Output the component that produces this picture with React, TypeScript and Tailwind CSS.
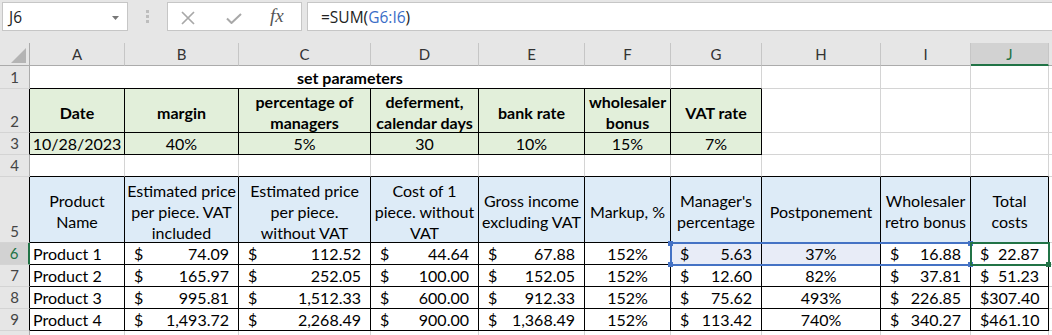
import React from "react";
import clsx from "clsx";

const COLS = ["A", "B", "C", "D", "E", "F", "G", "H", "I", "J", "K"];

// black-bordered blocks: A2:G3 (parameters) and A5:J9 (products)
const inRange = (r: number, c: number) =>
  ((r === 2 || r === 3) && c <= 6) || (r >= 5 && r <= 9 && c <= 9);

const FILL = {
  green: "bg-[#e2efda]",
  blue: "bg-[#ddebf7]",
  sel: "bg-[#e8ecf7]",
} as const;

type Fill = keyof typeof FILL;

type CellProps = {
  r: number;
  c: number;
  span?: number;
  fill?: Fill;
  className?: string;
  children?: React.ReactNode;
};

const Cell = ({ r, c, span = 1, fill, className, children }: CellProps) => {
  const last = c + span - 1;
  const rightBlack = inRange(r, last) || inRange(r, last + 1);
  const cols = Array.from({ length: span }, (_, i) => c + i);
  const bottomBlack = cols.some((i) => inRange(r, i) || inRange(r + 1, i));

  return (
    <div
      className={clsx(
        "relative flex min-w-0 whitespace-nowrap border-b",
        last !== 10 && "border-r",
        rightBlack ? "border-r-black" : "border-r-[#d4d4d4]",
        bottomBlack ? "border-b-black" : "border-b-[#d4d4d4]",
        fill ? FILL[fill] : "bg-white",
        span === 6 && "col-span-6",
        className
      )}
    >
      {children}
    </div>
  );
};

// row 10 is only a sliver at the bottom edge, its number is not visible
const RowHead = ({ r }: { r: number }) => {
  const active = r === 6;
  return (
    <div
      className={clsx(
        "flex items-end justify-center border-b border-b-[#d4d4d4] text-[15px] leading-[22px]",
        active
          ? "border-r-2 border-r-[#217346] bg-[#d2d2d2] text-[#217346]"
          : clsx(
              "border-r bg-[#e6e6e6] text-[#444]",
              inRange(r, 0) ? "border-r-black" : "border-r-[#ababab]"
            )
      )}
    >
      {r < 10 ? r : null}
    </div>
  );
};

const Money = ({ v }: { v: string }) => (
  <div className="flex w-full items-center justify-between px-[9px] pt-[1px]">
    <span>$</span>
    <span>{v}</span>
  </div>
);

const Centered = ({ children }: { children: React.ReactNode }) => (
  <div className="flex w-full items-center justify-center pt-[1px]">{children}</div>
);

const Wrapped = ({ text, bold }: { text: string; bold?: boolean }) => (
  <div
    className={clsx(
      "flex w-full items-center justify-center whitespace-pre-line pt-[3px] text-center leading-[21px]",
      bold && "font-bold"
    )}
  >
    {text}
  </div>
);

const params = [
  ["Date", "10/28/2023"],
  ["margin", "40%"],
  ["percentage of\nmanagers", "5%"],
  ["deferment,\ncalendar days", "30"],
  ["bank rate", "10%"],
  ["wholesaler\nbonus", "15%"],
  ["VAT rate", "7%"],
];

const headers = [
  "Product\nName",
  "Estimated price\nper piece. VAT\nincluded",
  "Estimated price\nper piece.\nwithout VAT",
  "Cost of 1\npiece. without\nVAT",
  "Gross income\nexcluding VAT",
  "Markup, %",
  "Manager's\npercentage",
  "Postponement",
  "Wholesaler\nretro bonus",
  "Total\ncosts",
];

const products = [
  ["Product 1", "74.09", "112.52", "44.64", "67.88", "152%", "5.63", "37%", "16.88", "22.87"],
  ["Product 2", "165.97", "252.05", "100.00", "152.05", "152%", "12.60", "82%", "37.81", "51.23"],
  ["Product 3", "995.81", "1,512.33", "600.00", "912.33", "152%", "75.62", "493%", "226.85", "307.40"],
  ["Product 4", "1,493.72", "2,268.49", "900.00", "1,368.49", "152%", "113.42", "740%", "340.27", "461.10"],
];

const PCT_COLS = [5, 7];

const FormulaBar = () => (
  <div className="flex h-[43px] items-start bg-[#e6e6e6] pl-[2px] pt-[2px] font-['Open_Sans','Noto_Sans',sans-serif] text-[15.5px] text-[#222]">
    <div className="flex h-[29px] w-[126px] items-center justify-between border border-[#c6c6c6] bg-white pl-[6px] pr-[8px] pt-[2px]">
      <span>J6</span>
      <svg width="7" height="4" viewBox="0 0 7 4">
        <path d="M0 0h7L3.5 4z" fill="#777" />
      </svg>
    </div>
    <div className="flex w-[39px] flex-col items-center gap-[2px] pt-[8px]">
      <span className="h-[3px] w-[3px] bg-[#bdbdbd]" />
      <span className="h-[3px] w-[3px] bg-[#bdbdbd]" />
      <span className="h-[3px] w-[3px] bg-[#bdbdbd]" />
    </div>
    <div className="flex h-[29px] w-[135px] items-center border border-[#c6c6c6] bg-white">
      <svg className="ml-[13px] mt-[3px]" width="14" height="14" viewBox="0 0 14 14">
        <path d="M1 1l12 12M13 1L1 13" stroke="#a8a8a8" strokeWidth="1.7" />
      </svg>
      <svg className="ml-[31px] mt-[4px]" width="16" height="11" viewBox="0 0 16 11">
        <path d="M1 5.5l4.5 4.5L15 1" fill="none" stroke="#a8a8a8" strokeWidth="2" />
      </svg>
      <span className="ml-[28px] font-['Liberation_Serif',serif] text-[19px] italic text-[#555]">
        fx
      </span>
    </div>
    <div className="ml-[5px] flex h-[29px] flex-1 items-center border border-r-0 border-[#c6c6c6] bg-white pl-[13px] pt-[2px]">
      =SUM(<span className="text-[#3a6dc7]">G6:I6</span>)
    </div>
  </div>
);

const ColumnHeaders = () => (
  <>
    <div className="relative border-b border-r border-b-[#ababab] border-r-[#ababab] bg-[#e6e6e6]">
      <svg className="absolute left-[11px] top-[5px]" width="16" height="16" viewBox="0 0 16 16">
        <path d="M15 0v15H0z" fill="#b4b4b4" />
      </svg>
    </div>
    {COLS.map((col) =>
      col === "J" ? (
        <div
          key={col}
          className="flex items-center justify-center border-r border-b-2 border-r-[#c6c6c6] border-b-[#217346] bg-[#d2d2d2] pt-[1px] text-[15px] text-[#217346]"
        >
          {col}
        </div>
      ) : (
        <div
          key={col}
          className={clsx(
            "flex items-center justify-center border-b border-b-[#ababab] border-r-[#c6c6c6] bg-[#e6e6e6] text-[15px] text-[#333]",
            col !== "K" && "border-r"
          )}
        >
          {/* only a 3px sliver of column K is on screen */}
          {col === "K" ? null : col}
        </div>
      )
    )}
  </>
);

const emptyCells = (r: number, from: number) =>
  COLS.slice(from).map((_, i) => <Cell key={`${r}-${from + i}`} r={r} c={from + i} />);

export default function App() {
  return (
    <div className="h-[335px] w-[1052px] overflow-hidden bg-white">
      <FormulaBar />
      <div className="grid grid-cols-[30px_95px_114px_132px_108px_106px_86px_91px_119px_90px_78px_1fr] grid-rows-[23px_23px_44px_22px_22px_66px_22px_22px_22px_22px_22px] font-['Lato','Liberation_Sans',sans-serif] text-[16px] text-black">
        <ColumnHeaders />

        {/* row 1 */}
        <RowHead r={1} />
        <Cell r={1} c={0} span={6}>
          <div className="flex items-center pl-[267px] pt-[1px] font-bold">set parameters</div>
        </Cell>
        {emptyCells(1, 6)}

        {/* row 2 */}
        <RowHead r={2} />
        {params.map(([label], c) => (
          <Cell key={`2-${c}`} r={2} c={c} fill="green">
            <Wrapped text={label} bold />
          </Cell>
        ))}
        {emptyCells(2, 7)}

        {/* row 3 */}
        <RowHead r={3} />
        {params.map(([, value], c) => (
          <Cell key={`3-${c}`} r={3} c={c} fill="green">
            <Centered>{value}</Centered>
          </Cell>
        ))}
        {emptyCells(3, 7)}

        {/* row 4 */}
        <RowHead r={4} />
        {emptyCells(4, 0)}

        {/* row 5 */}
        <RowHead r={5} />
        {headers.map((h, c) => (
          <Cell key={`5-${c}`} r={5} c={c} fill="blue">
            <Wrapped text={h} />
          </Cell>
        ))}
        {emptyCells(5, 10)}

        {/* rows 6-9 */}
        {products.map((row, i) => {
          const r = 6 + i;
          return (
            <React.Fragment key={r}>
              <RowHead r={r} />
              {row.map((v, c) => (
                <Cell
                  key={`${r}-${c}`}
                  r={r}
                  c={c}
                  fill={r === 6 && (c === 6 || c === 7) ? "sel" : undefined}
                >
                  {c === 0 ? (
                    <div className="flex items-center pl-[3px] pt-[1px]">{v}</div>
                  ) : PCT_COLS.includes(c) ? (
                    <Centered>{v}</Centered>
                  ) : (
                    <Money v={v} />
                  )}
                  {r === 6 && c === 6 && (
                    <>
                      <div className="absolute -left-px -top-px z-10 h-[24px] w-[302px] border-2 border-[#4472c4]" />
                      <span className="absolute -left-[3px] -top-[2px] z-10 h-[5px] w-[5px] bg-[#4472c4]" />
                      <span className="absolute -left-[3px] top-[19px] z-10 h-[5px] w-[5px] bg-[#4472c4]" />
                      <span className="absolute left-[297px] -top-[2px] z-10 h-[5px] w-[5px] bg-[#4472c4]" />
                      <span className="absolute left-[297px] top-[19px] z-10 h-[5px] w-[5px] bg-[#4472c4]" />
                    </>
                  )}
                  {r === 6 && c === 9 && (
                    <>
                      <div className="absolute -left-px -top-px z-10 h-[24px] w-[80px] border-2 border-[#217346]" />
                      <span className="absolute left-[75px] top-[19px] z-10 h-[5px] w-[5px] bg-[#217346]" />
                    </>
                  )}
                </Cell>
              ))}
              {emptyCells(r, 10)}
            </React.Fragment>
          );
        })}

        {/* row 10 */}
        <RowHead r={10} />
        {emptyCells(10, 0)}
      </div>
    </div>
  );
}
